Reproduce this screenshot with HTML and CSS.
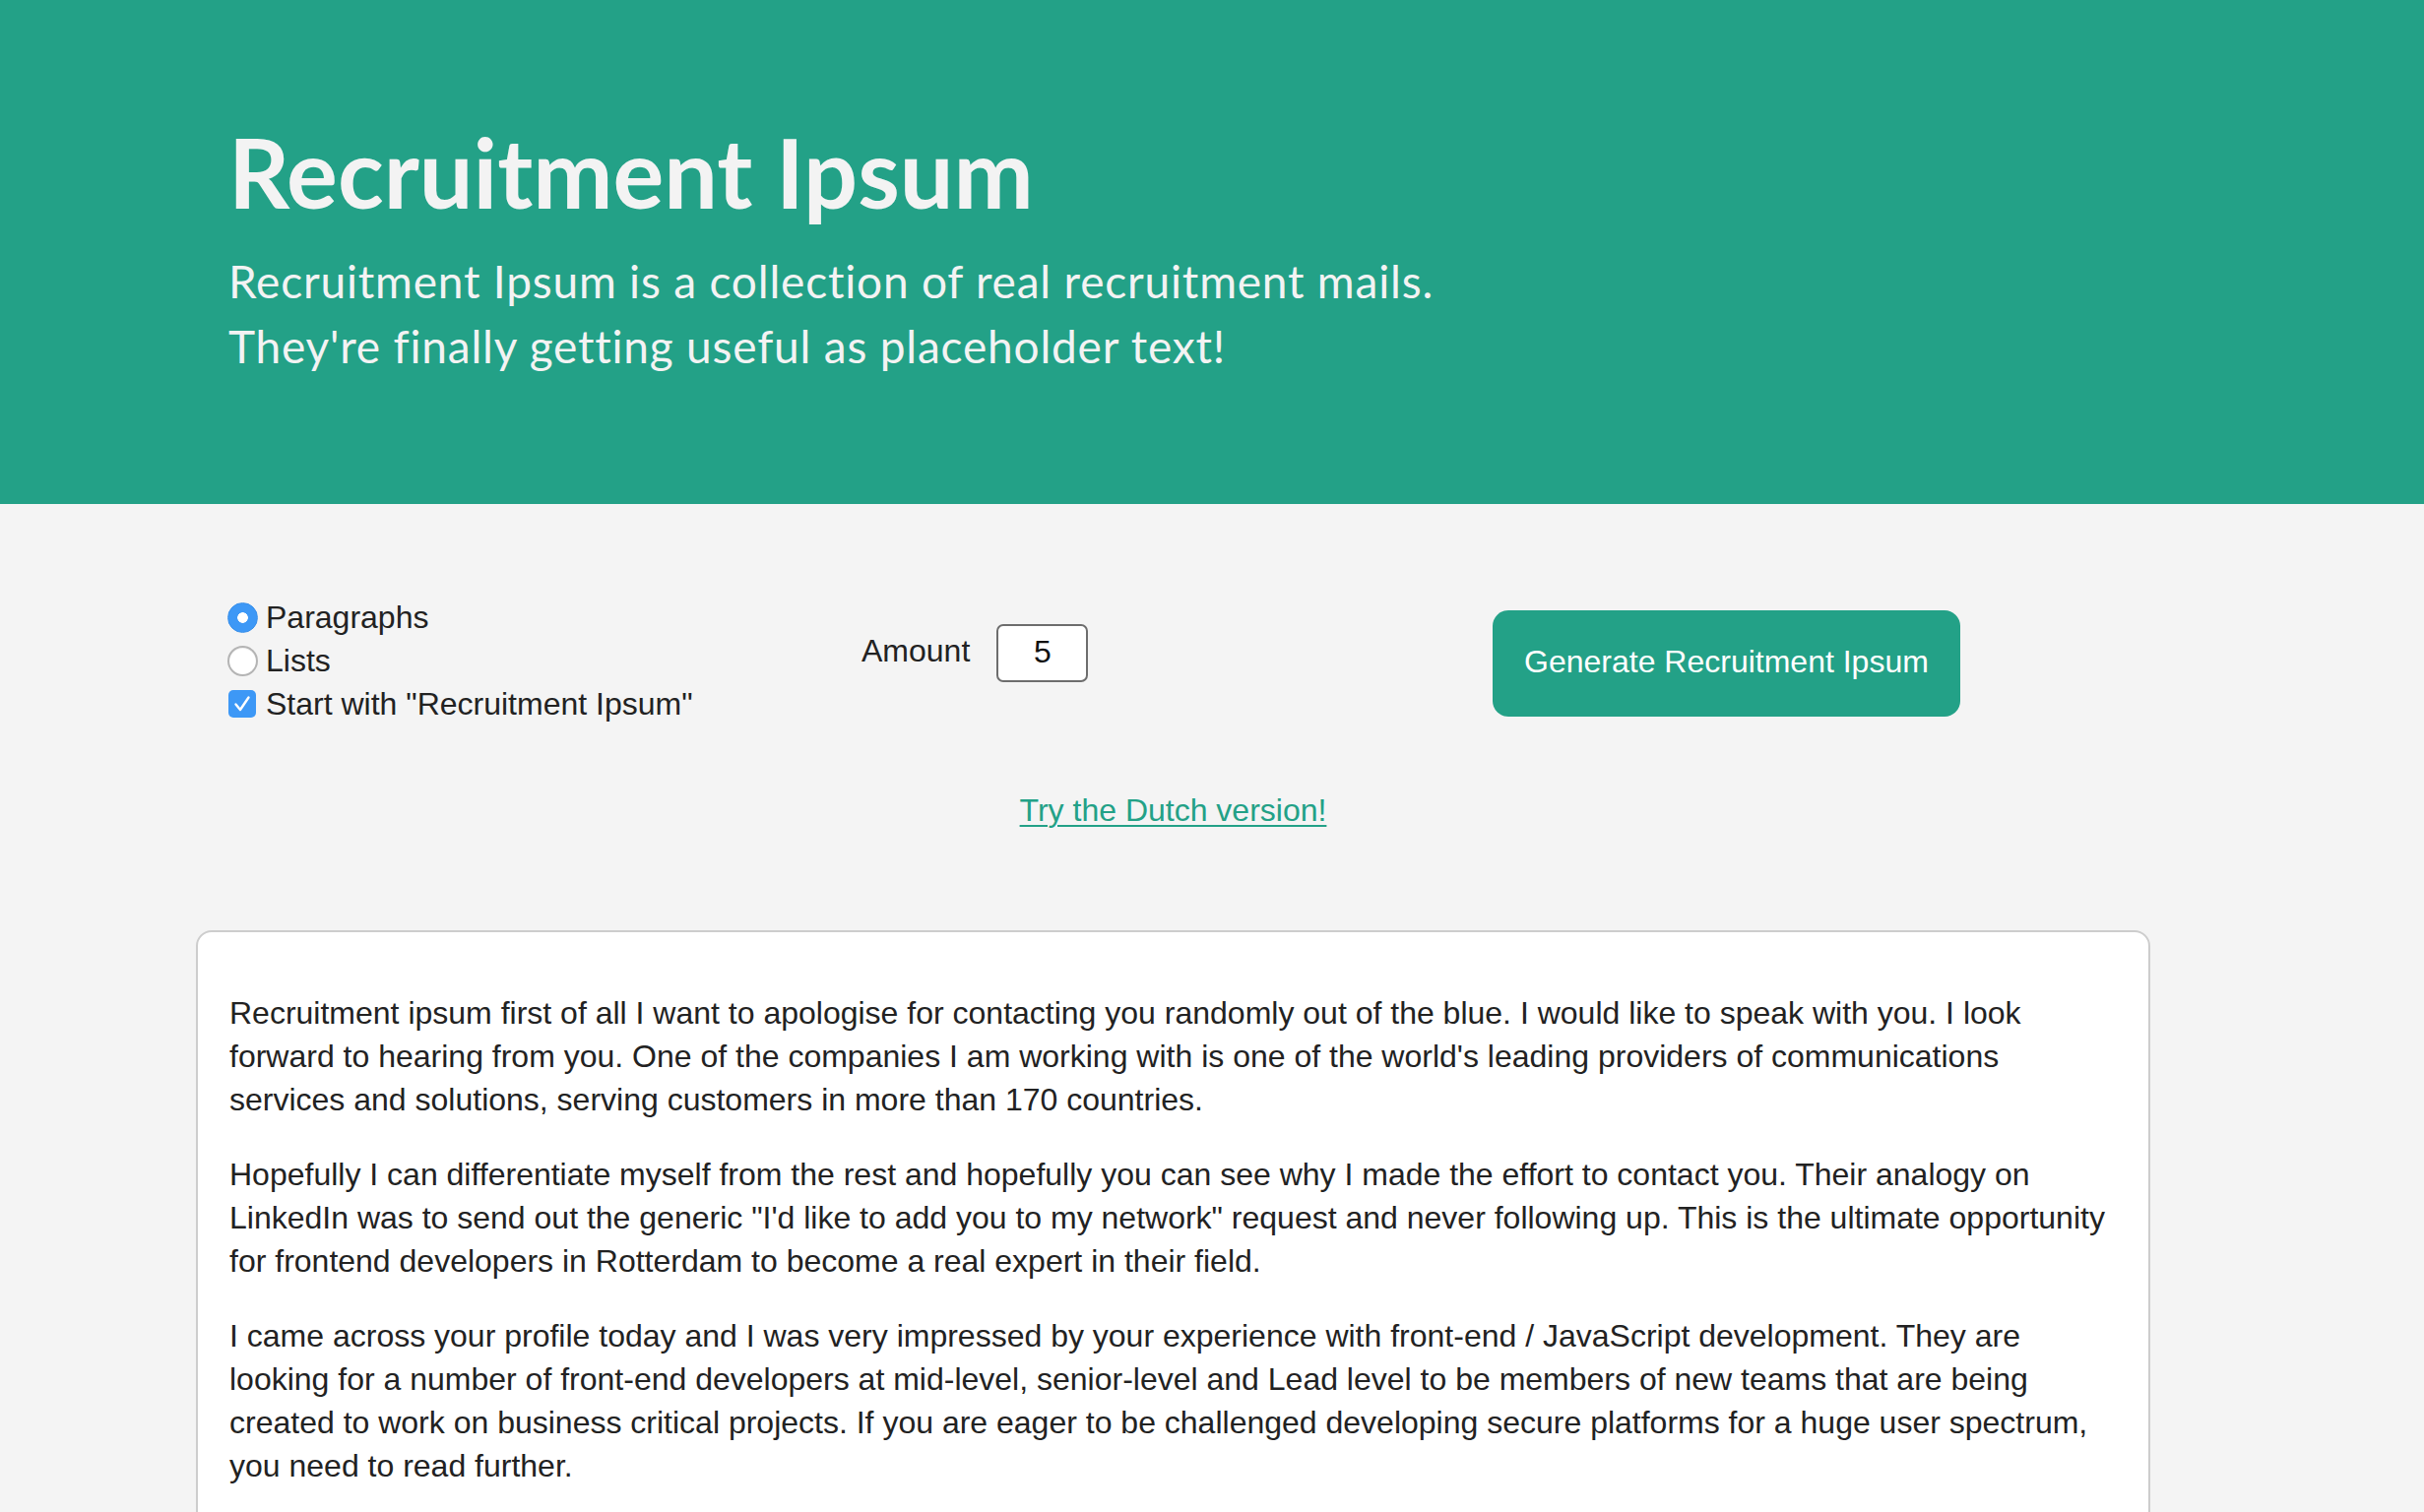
FILE: index.html
```html
<!DOCTYPE html>
<html lang="en">
<head>
<meta charset="utf-8">
<title>Recruitment Ipsum</title>
<link rel="stylesheet" href="styles.css">
</head>
<body>
<header class="hero">
  <div class="container hero-inner">
    <h1 class="hero-title">Recruitment Ipsum</h1>
    <p class="hero-sub">Recruitment Ipsum is a collection of real recruitment mails.<br>They're finally getting useful as placeholder text!</p>
  </div>
</header>
<main class="container main">
  <form class="controls">
    <div class="options">
      <label class="option">
        <span class="mark"><span class="radio radio-on"></span></span>
        <span>Paragraphs</span>
      </label>
      <label class="option">
        <span class="mark"><span class="radio"></span></span>
        <span>Lists</span>
      </label>
      <label class="option">
        <span class="mark"><span class="check"><svg width="28" height="28" viewBox="0 0 28 28"><path d="M7.5 14.5 L12 20 L20.5 7.5" fill="none" stroke="#fff" stroke-width="2.4" stroke-linecap="round" stroke-linejoin="round"/></svg></span></span>
        <span>Start with "Recruitment Ipsum"</span>
      </label>
    </div>
    <div class="amount">
      <span class="amount-label">Amount</span>
      <span class="amount-input">5</span>
    </div>
    <div class="action">
      <button type="button" class="generate">Generate Recruitment Ipsum</button>
    </div>
  </form>
  <p class="dutch"><a href="#">Try the Dutch version!</a></p>
  <section class="card">
    <p>Recruitment ipsum first of all I want to apologise for contacting you randomly out of the blue. I would like to speak with you. I look forward to hearing from you. One of the companies I am working with is one of the world's leading providers of communications services and solutions, serving customers in more than 170 countries.</p>
    <p>Hopefully I can differentiate myself from the rest and hopefully you can see why I made the effort to contact you. Their analogy on LinkedIn was to send out the generic "I'd like to add you to my network" request and never following up. This is the ultimate opportunity for frontend developers in Rotterdam to become a real expert in their field.</p>
    <p>I came across your profile today and I was very impressed by your experience with front-end / JavaScript development. They are looking for a number of front-end developers at mid-level, senior-level and Lead level to be members of new teams that are being created to work on business critical projects. If you are eager to be challenged developing secure platforms for a huge user spectrum, you need to read further.</p>
  </section>
</main>
</body>
</html>
```

FILE: styles.css
```css
html, body {
  margin: 0;
  padding: 0;
}
body {
  background: #f4f4f4;
  font-family: "Liberation Sans", Arial, Helvetica, sans-serif;
  font-size: 32px;
  line-height: 44px;
  color: #222;
}
.container {
  width: 1985px;
  margin-left: 199px;
  box-sizing: border-box;
}
.hero {
  background: #23a187;
  height: 512px;
  box-sizing: border-box;
  padding-top: 117px;
}
.hero-inner {
  padding-left: 33px;
}
.hero-title {
  margin: 0;
  font-family: Lato, "Open Sans", sans-serif;
  font-weight: 700;
  font-size: 97px;
  line-height: 115px;
  color: #f3f3f3;
}
.hero-sub {
  margin: 21px 0 0;
  font-family: Lato, "Open Sans", sans-serif;
  font-weight: 400;
  font-size: 46px;
  letter-spacing: 0.8px;
  line-height: 66px;
  color: #f3f3f3;
}
.main {
  padding-top: 93px;
}
.controls {
  display: grid;
  grid-template-columns: 643px 641px 1fr;
  align-items: start;
  margin: 0 0 0 33px;
}
.options {
  display: flex;
  flex-direction: column;
}
.option {
  display: flex;
  align-items: center;
  height: 44px;
  gap: 8px;
}
.mark {
  width: 32px;
  height: 32px;
  margin-left: -2px;
  display: flex;
  align-items: center;
  justify-content: center;
}
.radio {
  width: 31px;
  height: 31px;
  box-sizing: border-box;
  border-radius: 50%;
  border: 2px solid #b4b4b4;
  background: #fff;
  box-shadow: inset 0 1px 1px rgba(0,0,0,0.06);
}
.radio-on {
  border: 1px solid #3a90ea;
  background: radial-gradient(circle, #fff 0 5px, #3d98f6 5.6px);
  box-shadow: none;
}
.check {
  width: 28px;
  height: 28px;
  border-radius: 5px;
  background: #3d98f6;
  display: block;
}
.check svg {
  display: block;
}
.amount {
  display: flex;
  align-items: center;
  margin-top: 29px;
}
.amount-label {
  margin-right: 27px;
  padding-bottom: 5px;
}
.amount-input {
  width: 93px;
  height: 59px;
  box-sizing: border-box;
  border: 2px solid #6d6d6d;
  border-radius: 7px;
  background: #fff;
  display: flex;
  align-items: center;
  justify-content: center;
  padding-bottom: 4px;
  color: #111;
}
.action {
  margin-top: 15px;
}
.generate {
  height: 108px;
  box-sizing: border-box;
  padding: 0 32px 5px;
  border: none;
  border-radius: 16px;
  background: #23a187;
  color: #fff;
  font-family: "Liberation Sans", Arial, Helvetica, sans-serif;
  font-size: 32px;
  line-height: 44px;
}
.dutch {
  margin: 64px 0 0;
  text-align: center;
}
.dutch a {
  color: #23a187;
  text-decoration: underline;
  text-underline-offset: 4px;
  text-decoration-thickness: 2px;
}
.card {
  margin-top: 100px;
  background: #fff;
  border: 2px solid #cdcdcd;
  border-radius: 16px;
  padding: 28px 32px 40px;
}
.card p {
  margin: 32px 0;
}
```
